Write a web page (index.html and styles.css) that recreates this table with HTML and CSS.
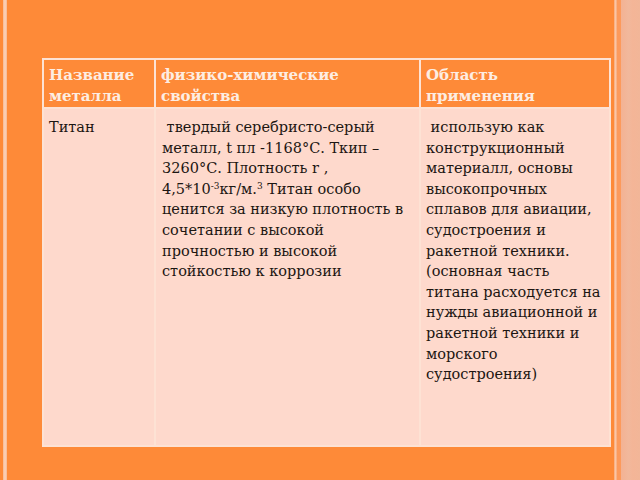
FILE: index.html
```html
<!DOCTYPE html>
<html lang="ru">
<head>
<meta charset="utf-8">
<link rel="stylesheet" href="styles.css">
</head>
<body>
<div class="slide">
  <div class="edge-left"><span class="stripe"></span></div>
  <main class="stage">
    <table class="metals">
      <colgroup>
        <col class="c1"><col class="c2"><col class="c3">
      </colgroup>
      <thead>
        <tr>
          <th>Название<br>металла</th>
          <th>физико-химические<br>свойства</th>
          <th>Область<br>применения</th>
        </tr>
      </thead>
      <tbody>
        <tr>
          <td>Титан</td>
          <td>&nbsp;твердый серебристо-серый<br>металл, t пл -1168°С. Ткип –<br>3260°С. Плотность r ,<br>4,5*10<sup>-3</sup>кг/м.<sup>3</sup> Титан особо<br>ценится за низкую плотность в<br>сочетании с высокой<br>прочностью и высокой<br>стойкостью к коррозии</td>
          <td>&nbsp;использую как<br>конструкционный<br>материалл, основы<br>высокопрочных<br>сплавов для авиации,<br>судостроения и<br>ракетной техники.<br>(основная часть<br>титана расходуется на<br>нужды авиационной и<br>ракетной техники и<br>морского<br>судостроения)</td>
        </tr>
      </tbody>
    </table>
  </main>
  <div class="edge-right"><span class="stripe"></span><span class="gap"></span><span class="panel"></span></div>
</div>
</body>
</html>
```

FILE: styles.css
```css
html, body {
  margin: 0;
  padding: 0;
  width: 640px;
  height: 480px;
  overflow: hidden;
  background: #fe8a38;
}

.slide {
  display: flex;
  width: 640px;
  height: 480px;
}

.edge-left {
  width: 7px;
  display: flex;
  padding-left: 3px;
  box-sizing: border-box;
}
.edge-left .stripe {
  width: 4px;
  background: linear-gradient(to right, #f7b892, #fcd3bb, #f7b892);
}

.stage {
  flex: 1;
  padding: 58px 3px 0 35px;
}

.edge-right {
  width: 28px;
  display: flex;
}
.edge-right .stripe {
  width: 3px;
  background: linear-gradient(to right, #f9a978, #fbc6a6, #f9a978);
}
.edge-right .gap {
  width: 4px;
  background: #fc9a5c;
}
.edge-right .panel {
  flex: 1;
  background: linear-gradient(to right, #f3b293, #f1b89c 40%, #f4b597 60%, #f2b698);
}

.metals {
  border-collapse: collapse;
  width: 567px;
  height: 389px;
  table-layout: fixed;
  font-family: "DejaVu Serif", "Liberation Serif", serif;
  font-size: 14.5px;
  line-height: 20.6px;
  color: #1c1612;
}
.c1 { width: 112px; }
.c2 { width: 265px; }
.c3 { width: 190px; }

.metals th, .metals td {
  border: 2px solid #fde2d4;
  text-align: left;
  vertical-align: top;
  padding: 4px 4px 0 5px;
  white-space: nowrap;
}

.metals thead tr { height: 49px; }
.metals th {
  background: #fe8a38;
  color: #fdede2;
  font-weight: bold;
  font-size: 15px;
  padding-top: 5px;
  height: 49px;
  box-sizing: border-box;
}

.metals td {
  background: #fed9cc;
  padding-top: 8px;
}
.metals td:nth-child(2) { padding-left: 6px; }

.metals sup {
  font-size: 9px;
  line-height: 0;
  vertical-align: 5px;
}
```
